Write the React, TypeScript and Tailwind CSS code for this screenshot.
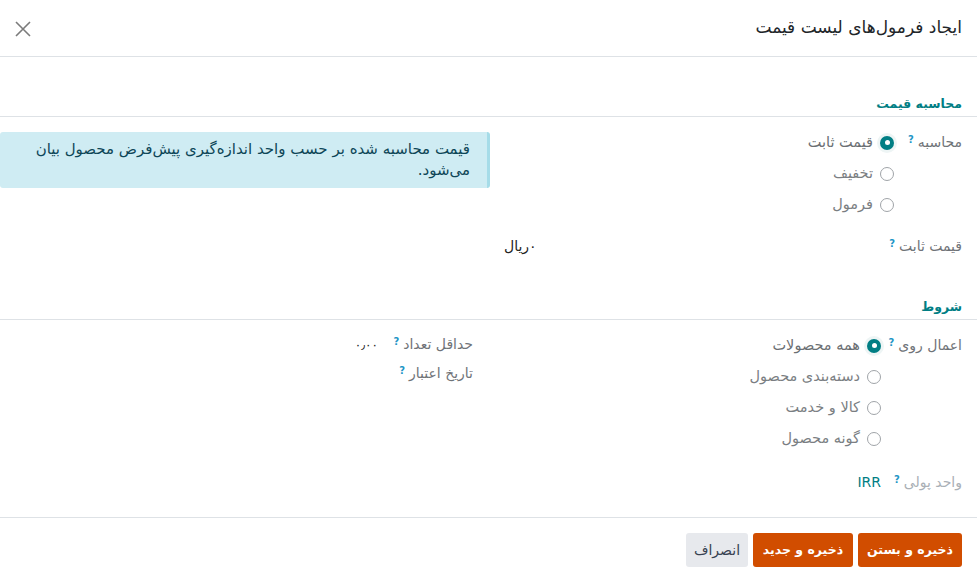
import React from "react";

const TEAL = "#017e84";

function Q() {
  return (
    <sup className="text-[10px] font-semibold text-[#1f96c6] mr-[4px] relative top-[-3px]">?</sup>
  );
}

function Radio({ checked }: { checked?: boolean }) {
  return checked ? (
    <span className="w-[14px] h-[14px] rounded-full bg-[#017e84] flex items-center justify-center shrink-0 shadow-[0_0_0_3px_#eef5f5]">
      <span className="w-[5px] h-[5px] rounded-full bg-white" />
    </span>
  ) : (
    <span className="w-[14px] h-[14px] rounded-full border border-[#a0a4a8] bg-white shrink-0" />
  );
}

function Option({ checked, label }: { checked?: boolean; label: string }) {
  return (
    <div className="h-[31px] flex items-center gap-[7px] whitespace-nowrap">
      <Radio checked={checked} />
      <span className={checked ? "text-[#6b6f73] text-[14.5px]" : "text-[#7a7e82] text-[14.5px]"}>{label}</span>
    </div>
  );
}

export default function App() {
  return (
    <div
      dir="rtl"
      className="w-[977px] h-[579px] bg-white overflow-hidden text-[14px] text-[#374151]"
      style={{ fontFamily: '"DejaVu Sans", "Noto Sans", sans-serif' }}
    >
      {/* Header */}
      <div className="h-[57px] border-b border-[#dee2e6] flex items-center justify-between pr-[15px] pl-[13px]">
        <div className="text-[17px] text-[#212529]">ایجاد فرمول‌های لیست قیمت</div>
        <svg width="20" height="20" viewBox="0 0 20 20" className="mt-[1px]">
          <path d="M3 3 L17 17 M17 3 L3 17" stroke="#7b7b7b" strokeWidth="1.6" fill="none" />
        </svg>
      </div>

      {/* Body */}
      <div className="pr-[15px]">
        {/* Section 1 */}
        <div className="mt-[37px] h-[23px] border-b border-[#dee2e6] -mr-[15px] pr-[15px]">
          <div className="leading-[20px] text-[12.5px] font-bold" style={{ color: TEAL }}>محاسبه قیمت</div>
        </div>
        <div className="grid grid-cols-[472px_490px] mt-[10px]">
          <div>
            <div className="flex">
              <div className="w-[68px] shrink-0 h-[31px] flex items-center text-[#6f7378] whitespace-nowrap">
                <span>محاسبه</span>
                <Q />
              </div>
              <div className="flex flex-col">
                <Option checked label="قیمت ثابت" />
                <Option label="تخفیف" />
                <Option label="فرمول" />
              </div>
            </div>
            <div className="flex mt-[11px] h-[31px] items-center">
              <div className="w-[68px] shrink-0 flex items-center text-[#6f7378] whitespace-nowrap">
                <span>قیمت ثابت</span>
                <Q />
              </div>
              <div className="flex-1 flex justify-end pl-[14px] text-[#222]">۰ریال</div>
            </div>
          </div>
          <div className="pt-[5px]">
            <div className="bg-[#cfecf3] border-r-[3px] border-[#a6dce8] rounded-[3px] text-[#0d4657] text-[15px] leading-[21px] pr-[17px] pl-[10px] py-[7px]">
              قیمت محاسبه شده بر حسب واحد اندازه‌گیری پیش‌فرض محصول بیان می‌شود.
            </div>
          </div>
        </div>

        {/* Section 2 */}
        <div className="mt-[35px] h-[23px] border-b border-[#dee2e6] -mr-[15px] pr-[15px]">
          <div className="leading-[20px] text-[12.5px] font-bold" style={{ color: TEAL }}>شروط</div>
        </div>
        <div className="grid grid-cols-[472px_490px] mt-[10px]">
          <div>
            <div className="flex">
              <div className="w-[81px] shrink-0 h-[31px] flex items-center text-[#6f7378] whitespace-nowrap">
                <span>اعمال روی</span>
                <Q />
              </div>
              <div className="flex flex-col">
                <Option checked label="همه محصولات" />
                <Option label="دسته‌بندی محصول" />
                <Option label="کالا و خدمت" />
                <Option label="گونه محصول" />
              </div>
            </div>
            <div className="flex mt-[13px] h-[31px] items-center">
              <div className="w-[81px] shrink-0 flex items-center text-[#aab0b6] whitespace-nowrap">
                <span>واحد پولی</span>
                <Q />
              </div>
              <div className="text-[#017e84]">IRR</div>
            </div>
          </div>
          <div className="pr-[17px]">
            <div className="flex h-[29px] items-center">
              <div className="w-[95px] shrink-0 flex items-center text-[#6f7378] whitespace-nowrap">
                <span>حداقل تعداد</span>
                <Q />
              </div>
              <div className="text-[12px] text-[#222]">۰٫۰۰</div>
            </div>
            <div className="flex h-[29px] items-center">
              <div className="w-[95px] shrink-0 flex items-center text-[#6f7378] whitespace-nowrap">
                <span>تاریخ اعتبار</span>
                <Q />
              </div>
            </div>
          </div>
        </div>
      </div>

      {/* Footer */}
      <div className="mt-[19px] border-t border-[#dee2e6] pt-[15px] pr-[15px] flex gap-[5px]">
        <button className="h-[34px] w-[104px] rounded-[3px] bg-[#d14d00] text-white font-bold text-[12.5px]">ذخیره و بستن</button>
        <button className="h-[34px] w-[100px] rounded-[3px] bg-[#d14d00] text-white font-bold text-[12.5px]">ذخیره و جدید</button>
        <button className="h-[34px] w-[62px] rounded-[3px] bg-[#e7e9ed] text-[#374151] text-[14px]">انصراف</button>
      </div>
    </div>
  );
}
